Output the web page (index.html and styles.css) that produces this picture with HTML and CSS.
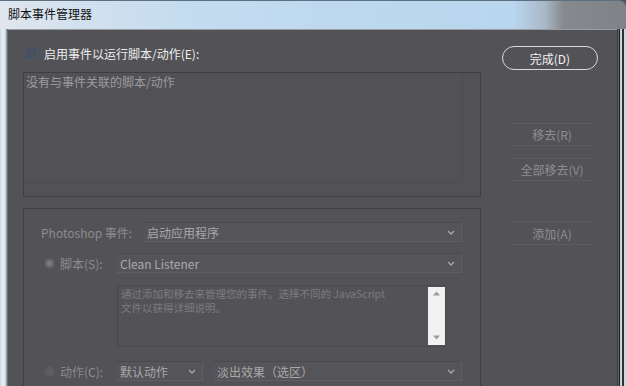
FILE: index.html
```html
<!DOCTYPE html>
<html lang="zh-CN">
<head>
<meta charset="utf-8">
<title>脚本事件管理器</title>
<link rel="stylesheet" href="styles.css">
</head>
<body>
<div class="window">
  <div class="titlebar"><span class="title">脚本事件管理器</span></div>
  <div class="frame">
    <div class="frame-left"></div>
    <div class="content">
      <div class="main">
        <div class="check-row">
          <span class="checkbox"></span>
          <span class="check-label">启用事件以运行脚本/动作(E):</span>
        </div>
        <div class="listbox">
          <div class="list-empty">没有与事件关联的脚本/动作</div>
        </div>
        <div class="group">
          <div class="row">
            <span class="label label-event">Photoshop 事件:</span>
            <div class="select grow"><span>启动应用程序</span><svg class="chev" width="8" height="5" viewBox="0 0 8 5"><polyline points="1,1 4,4 7,1" fill="none" stroke="#a9a9ab" stroke-width="1.3"/></svg></div>
          </div>
          <div class="row row-script">
            <span class="radio on"></span>
            <span class="label label-radio">脚本(S):</span>
            <div class="select grow"><span>Clean Listener</span><svg class="chev" width="8" height="5" viewBox="0 0 8 5"><polyline points="1,1 4,4 7,1" fill="none" stroke="#a9a9ab" stroke-width="1.3"/></svg></div>
          </div>
          <div class="desc">
            <div class="desc-text"><div>通过添加和移去来管理您的事件。选择不同的 JavaScript</div><div>文件以获得详细说明。</div></div>
            <div class="scrollbar">
              <svg width="9" height="5" viewBox="0 0 9 5"><polygon points="4.5,0.5 8,4.5 1,4.5" fill="#9a9a9a"/></svg>
              <svg width="9" height="5" viewBox="0 0 9 5"><polygon points="1,0.5 8,0.5 4.5,4.5" fill="#9a9a9a"/></svg>
            </div>
          </div>
          <div class="row row-action">
            <span class="radio"></span>
            <span class="label label-radio">动作(C):</span>
            <div class="select small"><span>默认动作</span><svg class="chev" width="8" height="5" viewBox="0 0 8 5"><polyline points="1,1 4,4 7,1" fill="none" stroke="#a9a9ab" stroke-width="1.3"/></svg></div>
            <div class="select grow"><span>淡出效果（选区）</span><svg class="chev" width="8" height="5" viewBox="0 0 8 5"><polyline points="1,1 4,4 7,1" fill="none" stroke="#a9a9ab" stroke-width="1.3"/></svg></div>
          </div>
        </div>
      </div>
      <div class="side">
        <button class="btn-done">完成(D)</button>
        <button class="btn-dis b-remove">移去(R)</button>
        <button class="btn-dis b-removeall">全部移去(V)</button>
        <button class="btn-dis b-add">添加(A)</button>
      </div>
    </div>
    <div class="frame-right"></div>
  </div>
</div>
</body>
</html>
```

FILE: styles.css
```css
* { box-sizing: border-box; }
html, body { margin: 0; padding: 0; }
body {
  width: 626px;
  height: 386px;
  overflow: hidden;
  font-family: "Noto Sans CJK SC", "Noto Sans", sans-serif;
  font-size: 12px;
  background: #535357;
}
.window {
  width: 626px;
  height: 386px;
  display: flex;
  flex-direction: column;
}
.titlebar {
  height: 29px;
  flex: none;
  border-top: 1px solid #5d7080;
  border-top-right-radius: 7px;
  background: linear-gradient(90deg, #dfe6ee 0%, #d3e1ee 12%, #c4dcf0 30%, #bcd8ef 60%, #b8d6ee 82%, #a9b9c6 87%, #868a8e 90%, #7f8387 100%);
  display: flex;
  align-items: center;
  padding-left: 8px;
}
.title {
  color: #111;
  font-size: 12px;
  line-height: 14px;
  margin-top: -2px;
}
.frame {
  flex: 1;
  display: flex;
  min-height: 0;
}
.frame-left {
  width: 8px;
  flex: none;
  background: linear-gradient(90deg, #c8d6e2 0px, #e6eef5 2px, #dfe8f0 5px, #b8c4cf 6px, #6c7176 7px, #6c7176 8px);
}
.frame-right {
  width: 9px;
  flex: none;
  background: linear-gradient(90deg, #3a3b3e 0px, #3a3b3e 1px, #5e6062 1px, #5e6062 2px, #1e2427 2px, #1e2427 3px, #bcc8cf 3px, #d6e2e8 5px, #2b3135 5px, #2b3135 7px, #c9d7df 7px, #c9d7df 9px);
}
.content {
  flex: 1;
  background: #535357;
  border-top: 1px solid #9a9ca0;
  display: flex;
  overflow: hidden;
}
.main {
  width: 473px;
  padding-left: 15px;
  padding-top: 13px;
  flex: none;
}
.check-row {
  height: 20px;
  display: flex;
  align-items: center;
}
.checkbox {
  width: 11px;
  height: 11px;
  margin-left: 3px;
  border: 1px solid #41577d;
  background: #48505a;
  box-shadow: inset 0 0 0 1px #4a4f57;
}
.check-label {
  margin-left: 7px;
  color: #ededed;
  font-size: 12px;
}
.listbox {
  margin-top: 9px;
  height: 125px;
  border: 1px solid #3f3f42;
  background: #525256;
  padding: 1px 2px;
  position: relative;
}
.listbox::after {
  content: "";
  position: absolute;
  left: 0;
  right: 17px;
  top: 0;
  bottom: 13px;
  border-right: 1px solid #4c4c50;
  border-bottom: 1px solid #4c4c50;
}
.list-empty {
  color: #9c9c9e;
  font-size: 12px;
  line-height: 16px;
}
.group {
  margin-top: 11px;
  height: 200px;
  border: 1px solid #404043;
  padding: 13px 18px 0 17px;
}
.row {
  height: 20px;
  display: flex;
  align-items: center;
}
.row-script { margin-top: 11px; }
.row-action { margin-top: 14px; }
.label {
  color: #8c8c8e;
  font-size: 12px;
  flex: none;
}
.label-event { width: 103px; }
.label-radio { width: 57px; margin-left: 5px; }
.radio {
  width: 11px;
  height: 11px;
  border-radius: 50%;
  margin-left: 3px;
  background: #5d5d60;
  border: 1px solid #58585b;
  flex: none;
}
.radio.on {
  background: radial-gradient(circle, #7a7a7c 0 2px, #69696c 3px);
}
.select {
  height: 20px;
  display: flex;
  align-items: center;
  justify-content: space-between;
  background: #555559;
  border-top: 1px solid #4a4a4e;
  border-bottom: 1px solid #5f5f63;
  border-right: 1px solid #5f5f63;
  padding: 0 6px 0 3px;
  color: #a8a8aa;
  font-size: 12px;
}
.grow { flex: 1; }
.small { width: 86px; margin-right: 11px; flex: none; }
.chev { flex: none; }
.desc {
  margin-left: 76px;
  margin-right: 16px;
  margin-top: 12px;
  height: 62px;
  border: 1px solid #4a4a4d;
  border-left-color: #464649;
  display: flex;
  justify-content: space-between;
}
.desc-text {
  padding: 1px 0 0 3px;
  color: #7c7c7f;
  font-size: 10.5px;
  line-height: 14px;
}
.scrollbar {
  width: 17px;
  margin: 1px 0 0 0;
  background: #f1f1f2;
  display: flex;
  flex-direction: column;
  justify-content: space-between;
  align-items: center;
  padding: 4px 0 5px;
  height: 58px;
  flex: none;
}
.side {
  width: 96px;
  margin-left: 21px;
  padding-top: 16px;
  display: flex;
  flex-direction: column;
  flex: none;
}
.btn-done {
  height: 24px;
  width: 96px;
  border: 1px solid #d9d9d9;
  border-radius: 12px;
  background: transparent;
  color: #f2f2f2;
  font-family: inherit;
  font-size: 12px;
  padding: 0;
}
.btn-dis {
  width: 80px;
  height: 23px;
  margin-left: 10px;
  background: transparent;
  border: none;
  border-top: 1px solid #5d5d61;
  border-bottom: 1px solid #5d5d61;
  color: #8e8e90;
  font-family: inherit;
  font-size: 12px;
  padding: 0;
}
.b-remove { margin-top: 53px; }
.b-removeall { margin-top: 12px; }
.b-add { margin-top: 40px; height: 24px; }
```
